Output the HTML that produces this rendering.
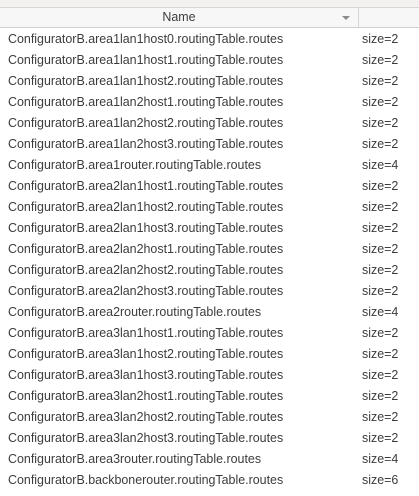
<html><head><style>
body{margin:0;width:419px;height:496px;background:#fff;font-family:"Liberation Sans",sans-serif;font-size:12.45px;color:#3c3c3c;overflow:hidden;position:relative}
.top{position:absolute;left:0;top:0;width:419px;height:7px;background:#f2f1f0;border-bottom:1px solid #d6d6d6}
.hdr{position:absolute;left:0;top:8px;width:419px;height:19px;background:#f7f7f7;border-bottom:1px solid #cfcfcf}
.hdr .n{position:absolute;left:0;width:358px;text-align:center;top:2px;color:#3c3c3c}
.hdr .d{position:absolute;left:358px;top:0;width:1px;height:19px;background:#d6d6d6}
.hdr .a{position:absolute;left:342px;top:8px;width:0;height:0;border-left:4px solid transparent;border-right:4px solid transparent;border-top:4px solid #8a8a8a}
.rows{position:absolute;top:29px;left:0}
.r{height:21px;line-height:21px;position:relative;width:419px}
.r span{position:absolute;left:8px}
.r b{font-weight:normal;position:absolute;left:362px}
</style></head><body>
<div class="top"></div>
<div class="hdr"><div class="n">Name</div><div class="a"></div><div class="d"></div></div>
<div class="rows">
<div class="r"><span>ConfiguratorB.area1lan1host0.routingTable.routes</span><b>size=2</b></div>
<div class="r"><span>ConfiguratorB.area1lan1host1.routingTable.routes</span><b>size=2</b></div>
<div class="r"><span>ConfiguratorB.area1lan1host2.routingTable.routes</span><b>size=2</b></div>
<div class="r"><span>ConfiguratorB.area1lan2host1.routingTable.routes</span><b>size=2</b></div>
<div class="r"><span>ConfiguratorB.area1lan2host2.routingTable.routes</span><b>size=2</b></div>
<div class="r"><span>ConfiguratorB.area1lan2host3.routingTable.routes</span><b>size=2</b></div>
<div class="r"><span>ConfiguratorB.area1router.routingTable.routes</span><b>size=4</b></div>
<div class="r"><span>ConfiguratorB.area2lan1host1.routingTable.routes</span><b>size=2</b></div>
<div class="r"><span>ConfiguratorB.area2lan1host2.routingTable.routes</span><b>size=2</b></div>
<div class="r"><span>ConfiguratorB.area2lan1host3.routingTable.routes</span><b>size=2</b></div>
<div class="r"><span>ConfiguratorB.area2lan2host1.routingTable.routes</span><b>size=2</b></div>
<div class="r"><span>ConfiguratorB.area2lan2host2.routingTable.routes</span><b>size=2</b></div>
<div class="r"><span>ConfiguratorB.area2lan2host3.routingTable.routes</span><b>size=2</b></div>
<div class="r"><span>ConfiguratorB.area2router.routingTable.routes</span><b>size=4</b></div>
<div class="r"><span>ConfiguratorB.area3lan1host1.routingTable.routes</span><b>size=2</b></div>
<div class="r"><span>ConfiguratorB.area3lan1host2.routingTable.routes</span><b>size=2</b></div>
<div class="r"><span>ConfiguratorB.area3lan1host3.routingTable.routes</span><b>size=2</b></div>
<div class="r"><span>ConfiguratorB.area3lan2host1.routingTable.routes</span><b>size=2</b></div>
<div class="r"><span>ConfiguratorB.area3lan2host2.routingTable.routes</span><b>size=2</b></div>
<div class="r"><span>ConfiguratorB.area3lan2host3.routingTable.routes</span><b>size=2</b></div>
<div class="r"><span>ConfiguratorB.area3router.routingTable.routes</span><b>size=4</b></div>
<div class="r"><span>ConfiguratorB.backbonerouter.routingTable.routes</span><b>size=6</b></div>
</div>
</body></html>
